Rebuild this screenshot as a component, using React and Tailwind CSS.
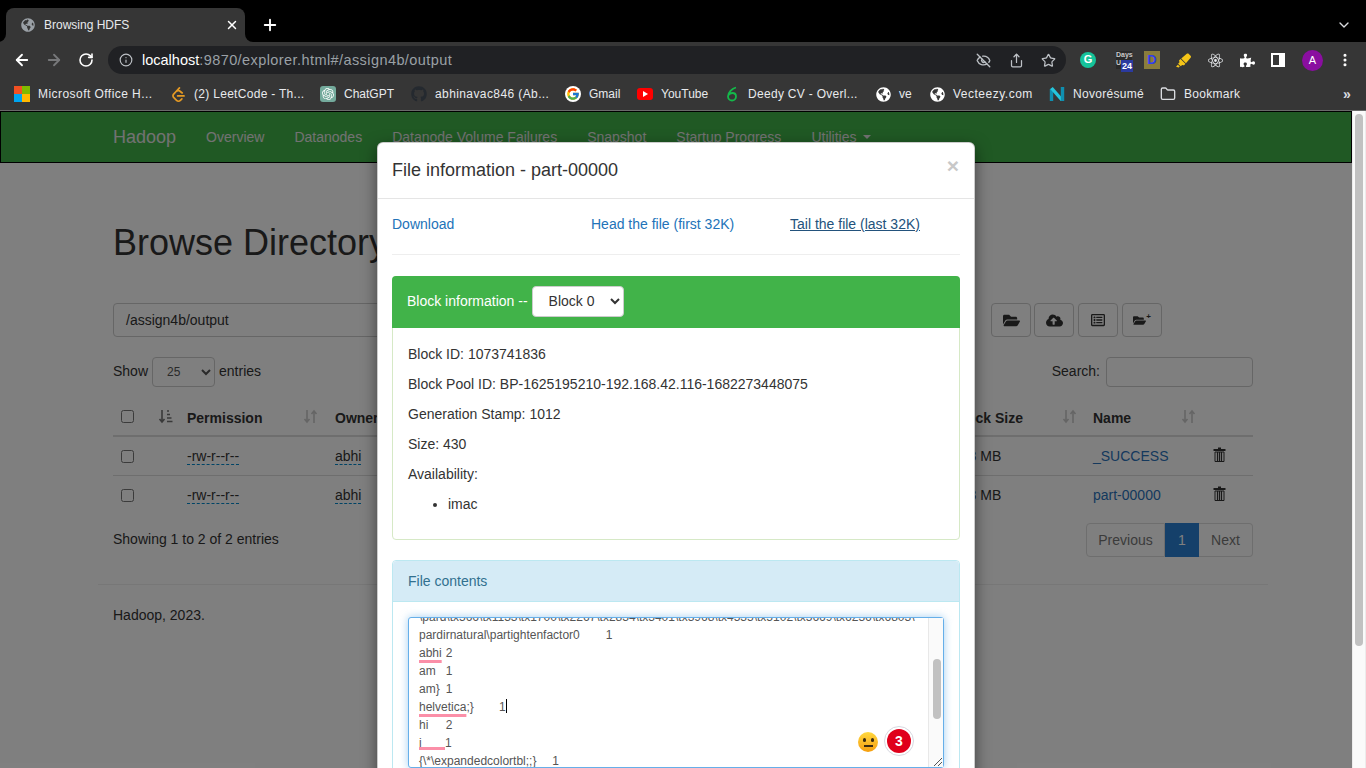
import React from 'react';
import { ArrowLeft, ArrowRight, ChevronDown, EllipsisVertical, EyeOff, Folder, Info, Plus, RotateCw, Share, Star, X } from 'lucide-react';
import { FaCloudUploadAlt, FaFolderOpen, FaGithub, FaGlobeAmericas, FaHighlighter, FaPuzzlePiece, FaRegListAlt } from 'react-icons/fa';
import { FcGoogle } from 'react-icons/fc';
import { SiLeetcode, SiOpenai, SiReact } from 'react-icons/si';

function SortIcon({ active }) {
    return (
        <svg width="15" height="15" viewBox="0 0 15 15" fill="none" stroke="#000" strokeWidth="1.6" opacity={active ? 0.55 : 0.2}>
            <path d="M4 1v12M1.5 10 4 13l2.5-3" />
            {active ? (
                <path d="M9 2h2M9 5.5h3M9 9h4.5M9 12.5h5.5" />
            ) : (
                <path d="M11 14V2M8.5 5 11 2l2.5 3" />
            )}
        </svg>
    );
}

function TrashIcon() {
    return (
        <svg width="13" height="15" viewBox="0 0 13 15" fill="none" stroke="#333">
            <path d="M5 1.5h3M.5 3h12" strokeWidth="2" />
            <path d="M2 5h9v9.5H2z" strokeWidth="1" />
            <path d="M4.5 5v9M6.5 5v9M8.5 5v9" strokeWidth="1.2" />
        </svg>
    );
}

function MicrosoftIcon() {
    return (
        <div className="grid grid-cols-2 w-4 h-4">
            <div className="bg-[#f25022]"></div>
            <div className="bg-[#7fba00]"></div>
            <div className="bg-[#00a4ef]"></div>
            <div className="bg-[#ffb900]"></div>
        </div>
    );
}

function DeedyIcon() {
    return (
        <svg width="16" height="16" viewBox="0 0 16 16" fill="none" stroke="#14b84a" strokeWidth="1.8">
            <path d="M12 1.5C8 2.5 4 6.5 4 10.5a4 4 0 1 0 8 0c0-2-1.5-3.5-3.5-3.5S5 8 4.5 9" />
        </svg>
    );
}

function NovoIcon() {
    return (
        <svg width="16" height="16" viewBox="0 0 16 16" fill="none" strokeWidth="3.4">
            <path d="M2.5 15V3" stroke="#0f8fb0" />
            <path d="M2.5 2 13 14" stroke="#25c6dc" />
            <path d="M13.5 15V1" stroke="#0f8fb0" />
        </svg>
    );
}

const bookmarks = [
    { label: 'Microsoft Office H...', width: 'w-[156px]', track: 'tracking-[0.45px]', icon: <MicrosoftIcon /> },
    { label: '(2) LeetCode - Th...', width: 'w-[150px]', track: 'tracking-[0.3px]', icon: <SiLeetcode size={15} className="text-[#e59a24]" /> },
    { label: 'ChatGPT', width: 'w-[91px]', track: '', icon: <div className="w-4 h-4 rounded-[3px] bg-[#74aa9c] flex items-center justify-center"><SiOpenai size={12} className="text-white" /></div> },
    { label: 'abhinavac846 (Ab...', width: 'w-[154px]', track: 'tracking-[0.4px]', icon: <FaGithub size={16} className="text-[#24292f]" /> },
    { label: 'Gmail', width: 'w-[72px]', track: '', icon: <div className="w-4 h-4 rounded-full bg-white flex items-center justify-center"><FcGoogle size={14} /></div> },
    { label: 'YouTube', width: 'w-[87px]', track: '', icon: <div className="w-4 h-3 rounded-[3px] bg-[#f00] flex items-center justify-center"><div className="w-0 h-0 border-y-[3px] border-y-transparent border-l-[5px] border-l-white"></div></div> },
    { label: 'Deedy CV - Overl...', width: 'w-[151px]', track: 'tracking-[0.3px]', icon: <DeedyIcon /> },
    { label: 've', width: 'w-[54px]', track: '', icon: <FaGlobeAmericas size={15} className="text-white" /> },
    { label: 'Vecteezy.com', width: 'w-[120px]', track: 'tracking-[0.5px]', icon: <FaGlobeAmericas size={15} className="text-white" /> },
    { label: 'Novorésumé', width: 'w-[111px]', track: 'tracking-[0.3px]', icon: <NovoIcon /> },
    { label: 'Bookmark', width: 'w-[90px]', track: 'tracking-[0.3px]', icon: <Folder size={16} className="text-[#dadce0]" /> },
];

function BrowserChrome() {
    return (
        <div className="shrink-0 text-[#e8eaed]">
            {/* Tab strip */}
            <div className="h-[42px] bg-black flex items-end pl-[6px] pr-[14px]">
                <div className="relative w-[239px] h-[34px] bg-[#363636] rounded-t-lg flex items-center pl-[15px] pr-[6px]">
                    <div className="absolute -left-2 bottom-0 w-2 h-2 bg-[#363636]"><div className="w-full h-full bg-black rounded-br-lg"></div></div>
                    <div className="absolute -right-2 bottom-0 w-2 h-2 bg-[#363636]"><div className="w-full h-full bg-black rounded-bl-lg"></div></div>
                    <FaGlobeAmericas size={14} className="text-[#9aa0a6]" />
                    <span className="ml-[9px] text-xs flex-1">Browsing HDFS</span>
                    <X size={14} strokeWidth={2.5} className="text-white" />
                </div>
                <div className="ml-[16px] h-[34px] flex items-center">
                    <Plus size={18} strokeWidth={2.5} className="text-white" />
                </div>
                <div className="ml-auto h-[34px] flex items-center">
                    <ChevronDown size={16} strokeWidth={2} className="text-[#dadce0]" />
                </div>
            </div>

            {/* Toolbar */}
            <div className="h-[36px] bg-[#363636] flex items-center pl-[13px]">
                <ArrowLeft size={18} strokeWidth={2.4} className="text-white" />
                <ArrowRight size={18} strokeWidth={2.4} className="ml-[14px] text-[#77787a]" />
                <RotateCw size={16} strokeWidth={2.4} className="ml-[15px] text-white" />
                <div className="ml-[14px] w-[958px] h-[28px] rounded-full bg-[#202124] flex items-center pl-[11px] pr-[10px]">
                    <Info size={14} className="text-[#bdc1c6]" />
                    <div className="ml-[9px] flex-1 text-[14.5px] text-[#9aa0a6] whitespace-nowrap">
                        <span className="text-white">localhost</span><span className="tracking-[0.42px]">:9870/explorer.html#/assign4b/output</span>
                    </div>
                    <EyeOff size={15} strokeWidth={2.2} className="text-[#bdc1c6]" />
                    <Share size={15} strokeWidth={2} className="ml-[18px] text-[#bdc1c6]" />
                    <Star size={15} strokeWidth={2} className="ml-[17px] text-[#bdc1c6]" />
                </div>
                <div className="ml-[14px] w-4 h-4 rounded-full bg-[#15c39a] flex items-center justify-center text-[11px] font-bold text-white">G</div>
                <div className="relative ml-[20px] w-4 h-[18px] bg-[#2a2a2a] text-[7px] leading-[8px] text-[#c8c8c8] font-bold">
                    Days<br />U
                    <div className="absolute left-[5px] top-[9px] w-[12px] h-[12px] bg-[#2b3a9f] text-[9px] leading-[12px] text-center text-white">24</div>
                </div>
                <div className="ml-[12px] w-4 h-[18px] bg-[#8a7d3c] flex items-center justify-center text-[13px] font-bold text-[#2f3cf0]">D</div>
                <FaHighlighter size={15} className="ml-[16px] text-[#f5c518]" />
                <SiReact size={15} className="ml-[17px] text-[#e8eaed]" />
                <FaPuzzlePiece size={15} className="ml-[17px] text-white" />
                <div className="ml-[16px] w-[14px] h-[14px] border-2 border-r-[6px] border-white"></div>
                <div className="ml-[17px] w-[21px] h-[21px] rounded-full bg-[#8a0ea0] text-[11px] leading-[21px] text-center text-white">A</div>
                <EllipsisVertical size={16} strokeWidth={2.6} className="ml-[14px] text-white" />
            </div>

            {/* Bookmarks */}
            <div className="h-[33px] bg-[#363636] border-b border-[#6a6a6a] flex items-center pl-[14px] relative">
                {bookmarks.map((b, idx) => (
                    <div key={idx} className={`${b.width} shrink-0 flex items-center text-xs whitespace-nowrap`}>
                        <div className="w-4 h-4 flex items-center justify-center">{b.icon}</div>
                        <span className={`ml-2 ${b.track}`}>{b.label}</span>
                    </div>
                ))}
                <span className="ml-[93px] text-sm font-bold text-[#dadce0]">»</span>
            </div>
        </div>
    );
}

const tableColumns = 'grid grid-cols-[74px_148px_618px_140px_120px_40px] items-center';

function FileRow({ name, last }) {
    return (
        <div className={`${tableColumns} ${last ? 'h-[38px]' : 'h-[39px] border-b border-[#ddd]'}`}>
            <div className="pl-2 flex items-center"><input type="checkbox" readOnly className="w-[13px] h-[13px]" /></div>
            <div><span className="border-b border-dashed border-[#0088cc]">-rw-r--r--</span></div>
            <div><span className="border-b border-dashed border-[#0088cc]">abhi</span></div>
            <div>128 MB</div>
            <div className="text-[#2a72bb]">{name}</div>
            <div className="-mt-[3px]"><TrashIcon /></div>
        </div>
    );
}

function BackgroundPage() {
    return (
        <div className="w-full h-full bg-white">
            <div className="h-[52px] bg-[#41b349] border border-black flex items-center pl-[112px] text-[#e4e4e4]">
                <span className="text-lg">Hadoop</span>
                <div className="ml-[30px] flex gap-[30px] text-sm items-center">
                    <span>Overview</span>
                    <span>Datanodes</span>
                    <span>Datanode Volume Failures</span>
                    <span>Snapshot</span>
                    <span>Startup Progress</span>
                    <span className="flex items-center">Utilities<span className="ml-[6px] w-0 h-0 border-x-4 border-x-transparent border-t-4 border-t-[#e4e4e4]"></span></span>
                </div>
            </div>

            <div className="ml-[113px] w-[1140px]">
                <h1 className="mt-[60px] h-[40px] text-[36px] leading-[40px] text-[#333]">Browse Directory</h1>

                <div className="mt-[40px] flex h-[34px]">
                    <div className="w-[860px] border border-[#ccc] rounded flex items-center pl-3">/assign4b/output</div>
                    <div className="ml-[18px] flex gap-[3px] text-[#333]">
                        <div className="w-[40px] border border-[#ccc] rounded flex items-center justify-center"><FaFolderOpen size={17} /></div>
                        <div className="w-[40px] border border-[#ccc] rounded flex items-center justify-center"><FaCloudUploadAlt size={17} /></div>
                        <div className="w-[40px] ml-px border border-[#ccc] rounded flex items-center justify-center"><FaRegListAlt size={14} /></div>
                        <div className="w-[40px] ml-px border border-[#ccc] rounded flex items-center justify-center">
                            <FaFolderOpen size={13} />
                            <span className="text-[8px] leading-[8px] font-bold -mt-[6px]">+</span>
                        </div>
                    </div>
                </div>

                <div className="mt-[20px] h-[30px] flex items-center">
                    <span className="mb-[2px]">Show</span>
                    <select className="mx-[4px] w-[63px] h-[30px] pl-[10px] text-xs border border-[#ccc] rounded bg-white text-[#555]" defaultValue="25">
                        <option>25</option>
                    </select>
                    <span className="mb-[2px]">entries</span>
                    <span className="ml-auto mb-[2px]">Search:</span>
                    <div className="ml-[6px] w-[147px] h-[30px] border border-[#ccc] rounded"></div>
                </div>

                <div className={`${tableColumns} mt-[11px] h-[39px] border-b-2 border-[#ddd] font-bold whitespace-nowrap`}>
                    <div className="pl-2 flex items-center gap-[24px]">
                        <input type="checkbox" readOnly className="w-[13px] h-[13px]" />
                        <SortIcon active />
                    </div>
                    <div className="flex items-center pr-[17px] justify-between"><span className="mt-[2px]">Permission</span><SortIcon /></div>
                    <div className="mt-[2px]">Owner</div>
                    <div className="flex items-center justify-between pr-[16px]"><span className="mt-[2px]">Block Size</span><SortIcon /></div>
                    <div className="flex items-center justify-between pr-[17px]"><span className="mt-[2px]">Name</span><SortIcon /></div>
                    <div></div>
                </div>
                <FileRow name="_SUCCESS" />
                <FileRow name="part-00000" last />

                <div className="mt-[9px] flex justify-between">
                    <div className="pt-[6px]">Showing 1 to 2 of 2 entries</div>
                    <div className="flex h-[34px]">
                        <div className="w-[79px] border border-[#ddd] rounded-l flex items-center justify-center text-[#777]">Previous</div>
                        <div className="w-[34px] bg-[#2a80d4] text-white flex items-center justify-center">1</div>
                        <div className="w-[54px] border border-[#ddd] border-l-0 rounded-r flex items-center justify-center text-[#777]">Next</div>
                    </div>
                </div>

                <div className="-mx-[15px] mt-[27px] border-t border-[#eee]"></div>
                <p className="mt-[20px]">Hadoop, 2023.</p>
            </div>
        </div>
    );
}

function FileContents() {
    return (
        <div className="relative h-[151px] flex border border-[#66afe9] rounded-[3px] bg-white shadow-[0_0_8px_rgba(102,175,233,0.6)]">
            <div className="flex-1 min-w-0 overflow-hidden pl-[10px] text-xs leading-[18px] text-[#555] whitespace-pre [tab-size:26.67px]">
                <div className="-mt-[10px]">{'\\pard\\tx566\\tx1133\\tx1700\\tx2267\\tx2834\\tx3401\\tx3968\\tx4535\\tx5102\\tx5669\\tx6236\\tx6803\\'}</div>
                <div>{'pardirnatural\\partightenfactor0\t1'}</div>
                <div><span className="underline decoration-[#fb8fa8] decoration-[3px] underline-offset-[3px]">abhi</span>{'\t2'}</div>
                <div>{'am\t1'}</div>
                <div>{'am}\t1'}</div>
                <div><span className="underline decoration-[#fb8fa8] decoration-[3px] underline-offset-[3px]">helvetica</span>{';}\t1'}<span className="inline-block w-px h-[14px] align-[-2px] bg-black"></span></div>
                <div>{'hi\t2'}</div>
                <div><span className="inline-block w-[26px] h-[16px] leading-[18px] border-b-[3px] border-[#fb8fa8]">i</span>1</div>
                <div>{'{\\*\\expandedcolortbl;;}\t1'}</div>
            </div>
            <div className="w-[15px] shrink-0 border-l border-[#e8e8e8] bg-[#fafafa] pl-[4px] pt-[41px]">
                <div className="w-[8px] h-[60px] rounded-full bg-[#c1c1c1]"></div>
            </div>
            {/* Grammarly overlay */}
            <div className="absolute left-[449px] top-[114px] w-5 h-5 rounded-full bg-gradient-to-b from-[#ffd83d] to-[#f59e0b] flex flex-col items-center justify-center">
                <div className="flex gap-[5px]">
                    <div className="w-[3px] h-[4px] rounded-full bg-[#3b2a10]"></div>
                    <div className="w-[3px] h-[4px] rounded-full bg-[#3b2a10]"></div>
                </div>
                <div className="mt-[3px] w-[9px] h-[2px] bg-[#3b2a10]"></div>
            </div>
            <div className="absolute left-[475px] top-[108px] w-[30px] h-[30px] rounded-full bg-white border border-[#d8d8e0] flex items-center justify-center">
                <div className="w-[24px] h-[24px] rounded-full bg-[#e0001b] flex items-center justify-center text-white font-bold text-[14px]">3</div>
            </div>
            <svg className="absolute right-0 bottom-0" width="10" height="10" viewBox="0 0 10 10" stroke="#555" fill="none">
                <path d="M1 9 9 1M5 9 9 5" />
            </svg>
        </div>
    );
}

function FileModal() {
    return (
        <div className="absolute left-[377px] top-[31px] w-[598px] bg-white border border-black/20 rounded-md shadow-[0_5px_15px_rgba(0,0,0,0.5)]">
            <div className="h-[56px] border-b border-[#e5e5e5] flex items-center justify-between px-[14px]">
                <h4 className="-mt-[2px] text-lg text-[#333]">File information - part-00000</h4>
                <span className="-mt-[11px] text-[21px] leading-none font-bold text-[#c8c8c8] mr-[1px]">×</span>
            </div>
            <div className="p-[14px] pt-[15px]">
                <div className="grid grid-cols-[199px_199px_1fr] h-[20px] leading-[20px]">
                    <span className="text-[#2273b9]">Download</span>
                    <span className="text-[#2273b9]">Head the file (first 32K)</span>
                    <span className="text-[#23527c] underline">Tail the file (last 32K)</span>
                </div>
                <div className="mt-[20px] border-t border-[#eee]"></div>

                <div className="mt-[21px] border border-[#d6e9c6] rounded">
                    <div className="h-[52px] -mx-px -mt-px rounded-t bg-[#41b349] flex items-center px-[15px] text-white">
                        <span className="mb-[2px]">Block information --</span>
                        <select className="ml-[4px] w-[92px] h-[31px] pl-[12px] mb-[2px] bg-white text-[#333] rounded border border-[#ccc]" defaultValue="Block 0">
                            <option>Block 0</option>
                        </select>
                    </div>
                    <div className="pt-[16px] px-[15px] pb-[15px] leading-[20px] flex flex-col gap-[10px]">
                        <p>Block ID: 1073741836</p>
                        <p>Block Pool ID: BP-1625195210-192.168.42.116-1682273448075</p>
                        <p>Generation Stamp: 1012</p>
                        <p>Size: 430</p>
                        <p>Availability:</p>
                        <ul className="list-disc pl-[40px] mb-[10px]">
                            <li>imac</li>
                        </ul>
                    </div>
                </div>

                <div className="mt-[20px] border border-[#bce8f1] rounded">
                    <div className="h-[41px] border-b border-[#bce8f1] bg-[#d5ebf6] rounded-t flex items-center pl-[15px] text-[#31708f]">File contents</div>
                    <div className="p-[15px]">
                        <FileContents />
                    </div>
                </div>
            </div>
        </div>
    );
}

export default function App() {
    return (
        <div className="w-[1366px] h-[768px] overflow-hidden flex flex-col text-sm text-[#333] [font-family:'Liberation_Sans',Arial,sans-serif]">
            <BrowserChrome />
            <div className="flex-1 min-h-0 flex">
                <div className="relative flex-1 min-w-0 overflow-hidden">
                    <BackgroundPage />
                    <div className="absolute inset-0 bg-black/50"></div>
                    <FileModal />
                </div>
                <div className="w-[14px] shrink-0 bg-[#fafafa] border-l border-[#ececec] border-r pl-[2px] pt-[3px]">
                    <div className="w-[8px] h-[532px] rounded-full bg-[#c1c1c1]"></div>
                </div>
            </div>
        </div>
    );
}
